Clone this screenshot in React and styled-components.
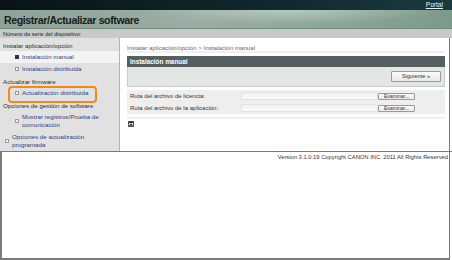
import React from "react";
import styled, { createGlobalStyle } from "styled-components";

const Global = createGlobalStyle`
  html, body { margin: 0; padding: 0; background: #fff; }
  body { font-family: "Liberation Sans", Arial, sans-serif; }
  * { box-sizing: border-box; }
`;

const Page = styled.div`
  width: 452px;
  height: 260px;
  display: flex;
  flex-direction: column;
  overflow: hidden;
  background: #fff;
`;

const TopBar = styled.div`
  height: 10px;
  background: linear-gradient(90deg, #0a1416 0%, #10262a 55%, #1a3a40 100%);
  display: flex;
  justify-content: flex-end;
  align-items: center;
  padding-right: 9px;
`;

const PortalLink = styled.a`
  color: #e8f0f0;
  font-size: 6.6px;
  text-decoration: underline;
  line-height: 1;
`;

const TitleBar = styled.div`
  height: 19px;
  background:
    radial-gradient(ellipse 150px 14px at 290px 0px, rgba(205,222,214,0.6), rgba(205,222,214,0) 100%),
    linear-gradient(90deg, #8fa298 0%, #9aaea3 45%, #8aa696 75%, #7c9a89 100%);
  display: flex;
  align-items: center;
  padding-left: 4px;
  border-bottom: 1px solid #6f8a7d;
`;

const Title = styled.h1`
  margin: 0;
  font-size: 10.6px;
  font-weight: bold;
  color: #16201d;
  letter-spacing: -0.4px;
  padding-top: 1px;
`;

const SerialRow = styled.div`
  height: 9px;
  background: #c6cac8;
  display: flex;
  align-items: center;
  padding-left: 3px;
  font-size: 5.5px;
  color: #222;
`;

const Body = styled.div`
  display: flex;
  height: 114px;
  border-bottom: 1px solid #7a7a7a;
`;

const Sidebar = styled.nav`
  width: 120px;
  background: #e1e1e1;
  border-right: 1px solid #b5b5b5;
  padding-top: 1px;
  display: flex;
  flex-direction: column;
`;

const Group = styled.div`
  font-size: 6.2px;
  color: #2c2c2c;
  padding: 3px 0 2px 3px;
  line-height: 7px;
`;

const Item = styled.div`
  display: flex;
  align-items: center;
  gap: 3px;
  padding: 2px 0 2px ${(p) => p.$indent}px;
  min-height: ${(p) => p.$h || 11}px;
  background: ${(p) => (p.$active ? "#f3f3f3" : "transparent")};
  font-size: 6.2px;
  line-height: 8px;
  color: #2d3f86;
  position: relative;
`;

const Bullet = styled.span`
  flex: none;
  width: 4px;
  height: 4px;
  border: 1px solid ${(p) => (p.$filled ? "#2a3550" : "#9a9a9a")};
  background: ${(p) => (p.$filled ? "#2a3550" : "#f5f5f5")};
`;

const Highlight = styled.span`
  position: absolute;
  left: 8px;
  top: -1px;
  width: 89px;
  height: 17px;
  border: 2px solid #f2891a;
  border-radius: 4px;
`;

const Main = styled.main`
  flex: 1;
  background: #fff;
  padding: 6px 4px 0 7px;
  border-right: 1px solid #7a7a7a;
  margin-right: 2px;
  display: flex;
  flex-direction: column;
`;

const Breadcrumb = styled.div`
  font-size: 6.2px;
  color: #666;
  border-bottom: 2px solid #efefef;
  margin-bottom: 3px;
  line-height: 7px;
`;

const PanelHead = styled.div`
  height: 11px;
  background: #555e60;
  color: #fff;
  font-size: 6.4px;
  font-weight: bold;
  padding-left: 3px;
  display: flex;
  align-items: center;
`;

const PanelBody = styled.div`
  height: 20px;
  background: #e3e6e5;
  border: 1px solid #c9cccc;
  border-top: none;
  display: flex;
  justify-content: flex-end;
  align-items: center;
  padding-right: 3px;
`;

const Btn = styled.button`
  font-family: "Liberation Sans", Arial, sans-serif;
  font-size: ${(p) => p.$fs || 5.6}px;
  color: #333;
  background: linear-gradient(#fbfbfb, #e8e8e8);
  border: 1px solid #9a9a9a;
  border-radius: 1px;
  padding: 0;
  width: ${(p) => p.$w}px;
  height: ${(p) => p.$h}px;
  line-height: 1;
  text-align: center;
`;

const Fields = styled.div`
  margin-top: 3px;
  background: #eeeeee;
`;

const FieldRow = styled.div`
  display: grid;
  grid-template-columns: 111px 137px auto;
  align-items: center;
  height: 12px;
  padding-left: 3px;
  font-size: 6px;
  color: #333;
`;

const FakeInput = styled.div`
  height: 8px;
  background: linear-gradient(#f0f0f0, #fafafa);
  border: 1px solid #e2e2e2;
`;

const Divider = styled.div`
  margin-top: 3px;
  height: 2px;
  background: #f1f1f1;
`;

const TopIcon = styled.span`
  margin-top: 2px;
  margin-left: 1px;
  width: 6px;
  height: 6px;
  border: 1px solid #555;
  background: #eee;
  display: flex;
  align-items: center;
  justify-content: center;
`;

const Footer = styled.footer`
  flex: 1;
  border-left: 2px solid #7a7a7a;
  border-right: 1px solid #7a7a7a;
  border-bottom: 2px solid #7a7a7a;
  margin-right: 2px;
  text-align: right;
  font-size: 5.8px;
  color: #333;
  padding: 2px 1px 0 0;
`;

export default function App() {
  return (
    <Page>
      <Global />
      <TopBar>
        <PortalLink>Portal</PortalLink>
      </TopBar>
      <TitleBar>
        <Title>Registrar/Actualizar software</Title>
      </TitleBar>
      <SerialRow>Número de serie del dispositivo:</SerialRow>
      <Body>
        <Sidebar>
          <Group>Instalar aplicación/opción</Group>
          <Item $indent={15} $active>
            <Bullet $filled />
            Instalación manual
          </Item>
          <Item $indent={15}>
            <Bullet />
            Instalación distribuida
          </Item>
          <Group>Actualizar firmware</Group>
          <Item $indent={15}>
            <Highlight />
            <Bullet />
            Actualización distribuida
          </Item>
          <Group>Opciones de gestión de software</Group>
          <Item $indent={15} $h={18}>
            <Bullet />
            <span>
              Mostrar registros/Prueba de
              <br />
              comunicación
            </span>
          </Item>
          <Item $indent={5} $h={18}>
            <Bullet />
            <span>
              Opciones de actualización
              <br />
              programada
            </span>
          </Item>
        </Sidebar>
        <Main>
          <Breadcrumb>Instalar aplicación/opción &gt; Instalación manual</Breadcrumb>
          <PanelHead>Instalación manual</PanelHead>
          <PanelBody>
            <Btn $w={50} $h={11}>Siguiente »</Btn>
          </PanelBody>
          <Fields>
            <FieldRow>
              <span>Ruta del archivo de licencia:</span>
              <FakeInput />
              <Btn $w={37} $h={7} $fs={5}>Examinar...</Btn>
            </FieldRow>
            <FieldRow>
              <span>Ruta del archivo de la aplicación:</span>
              <FakeInput />
              <Btn $w={37} $h={7} $fs={5}>Examinar...</Btn>
            </FieldRow>
          </Fields>
          <Divider />
          <TopIcon>
            <svg width="4" height="4" viewBox="0 0 4 4">
              <rect x="0" y="0" width="4" height="1" fill="#222" />
              <path d="M2 1.2 L4 3.8 L0 3.8 Z" fill="#222" />
            </svg>
          </TopIcon>
        </Main>
      </Body>
      <Footer>Version 3.1.0.19 Copyright CANON INC. 2011 All Rights Reserved</Footer>
    </Page>
  );
}
